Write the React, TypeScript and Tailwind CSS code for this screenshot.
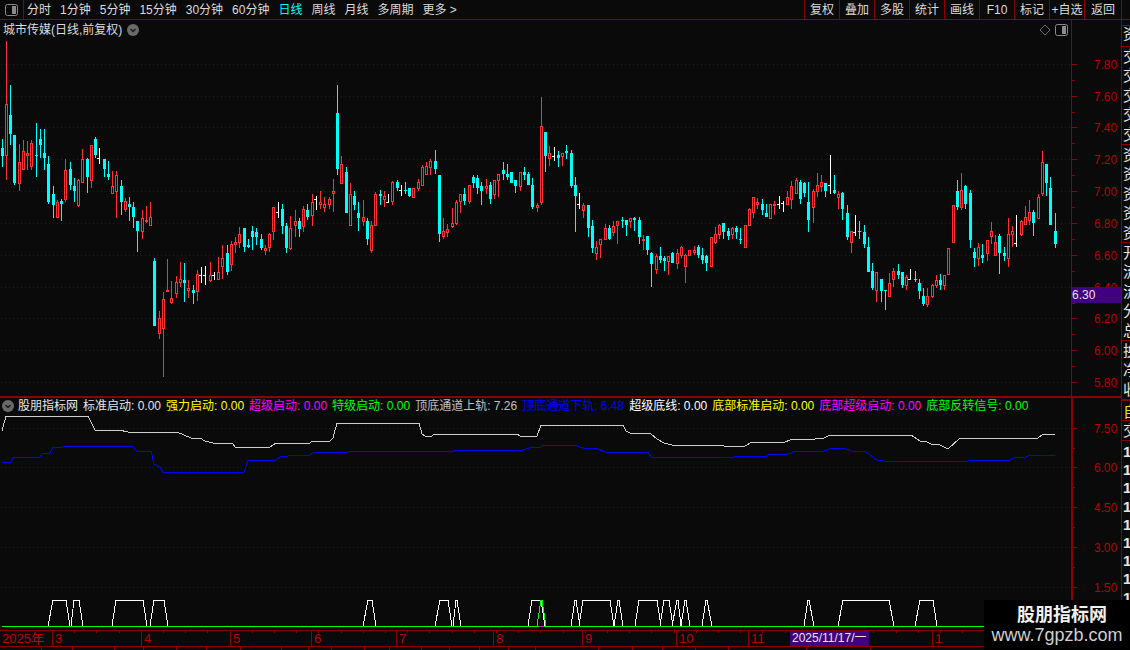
import type { ReactNode } from "react";

type Row = [number, number, number, number, number, string];

// candles read off the chart: x, high, body top, body bottom, low (in 3x px of each block)
const blocks: { x0: number; y0: number; rows: Row[] }[] = [
  {
    x0: 0,
    y0: 30,
    rows: [
      [7, 327, 354, 378, 411, "d"], [19, 33, 222, 377, 450, "u"], [31, 165, 255, 312, 345, "d"], [43, 315, 315, 459, 465, "d"],
      [58, 342, 396, 461, 483, "u"], [70, 330, 363, 419, 420, "u"], [82, 333, 369, 378, 420, "u"], [94, 330, 339, 411, 420, "u"],
      [109, 279, 375, 378, 441, "d"], [121, 297, 327, 345, 384, "d"], [133, 297, 369, 384, 420, "d"], [145, 378, 402, 516, 522, "d"],
      [160, 468, 492, 525, 564, "d"], [172, 510, 516, 564, 564, "u"], [184, 507, 513, 522, 573, "d"], [196, 387, 420, 510, 516, "u"],
      [211, 396, 417, 465, 480, "d"], [223, 444, 468, 483, 516, "d"], [235, 447, 450, 528, 530, "u"], [247, 357, 387, 459, 460, "u"],
      [262, 384, 387, 441, 489, "d"], [274, 345, 345, 453, 474, "u"], [286, 321, 327, 375, 384, "d"], [298, 354, 384, 387, 402, "f"],
      [313, 387, 387, 417, 441, "d"], [325, 393, 432, 441, 450, "d"], [337, 423, 468, 492, 492, "u"], [349, 423, 435, 486, 564, "u"],
      [364, 450, 468, 516, 555, "d"], [376, 504, 513, 540, 546, "u"], [388, 501, 522, 531, 573, "d"], [400, 516, 531, 561, 594, "d"],
      [412, 573, 573, 603, 666, "d"], [427, 540, 564, 606, 627, "u"], [439, 528, 570, 576, 579, "u"], [451, 516, 561, 588, 588, "u"],
      [463, 684, 693, 888, 888, "d"], [478, 843, 864, 912, 927, "u"], [490, 786, 807, 897, 1041, "u"], [502, 687, 780, 786, 786, "u"],
      [514, 753, 804, 820, 822, "u"], [529, 738, 756, 792, 804, "u"], [541, 696, 747, 759, 771, "u"], [553, 699, 750, 759, 816, "d"],
      [565, 750, 774, 783, 804, "u"], [580, 765, 780, 789, 822, "d"], [592, 720, 732, 786, 813, "u"], [604, 711, 735, 738, 759, "f"],
      [616, 708, 735, 738, 765, "f"], [631, 696, 735, 753, 756, "u"], [643, 726, 735, 738, 750, "f"], [655, 681, 726, 750, 750, "u"],
      [667, 645, 684, 711, 747, "u"], [682, 645, 669, 726, 735, "d"], [694, 633, 642, 705, 723, "u"], [706, 621, 636, 645, 669, "u"],
      [718, 591, 612, 639, 654, "u"], [733, 594, 594, 651, 666, "d"], [745, 627, 645, 651, 654, "d"], [757, 588, 603, 621, 660, "d"],
      [769, 594, 606, 621, 645, "d"], [784, 612, 627, 654, 660, "d"], [796, 645, 654, 663, 675, "u"], [808, 609, 612, 654, 666, "u"],
      [820, 531, 531, 606, 630, "u"], [835, 516, 546, 549, 564, "f"],
    ],
  },
  {
    x0: 280,
    y0: 70,
    rows: [
      [7, 402, 417, 468, 492, "d"], [19, 459, 468, 534, 549, "d"], [31, 438, 474, 537, 540, "u"], [46, 420, 453, 468, 501, "u"],
      [58, 444, 453, 477, 501, "d"], [70, 408, 417, 471, 486, "u"], [82, 402, 420, 441, 450, "d"], [97, 372, 396, 438, 468, "u"],
      [109, 378, 387, 390, 420, "f"], [121, 363, 396, 405, 417, "u"], [133, 381, 402, 414, 426, "u"], [148, 381, 387, 405, 417, "u"],
      [160, 327, 363, 372, 426, "u"], [172, 45, 129, 297, 315, "d"], [184, 258, 282, 342, 342, "u"], [199, 291, 306, 429, 429, "d"],
      [211, 339, 372, 468, 468, "u"], [223, 363, 378, 405, 420, "d"], [235, 396, 429, 444, 483, "d"], [250, 390, 441, 456, 468, "u"],
      [262, 444, 453, 507, 525, "d"], [274, 453, 465, 543, 549, "u"], [286, 366, 372, 468, 468, "u"], [301, 360, 372, 378, 405, "d"],
      [313, 363, 378, 390, 411, "u"], [325, 372, 396, 399, 399, "f"], [337, 333, 336, 396, 405, "u"], [352, 330, 336, 354, 363, "d"],
      [364, 345, 360, 363, 378, "f"], [376, 336, 360, 363, 372, "d"], [388, 354, 354, 378, 381, "d"], [400, 354, 354, 384, 384, "u"],
      [415, 327, 336, 357, 363, "u"], [427, 285, 291, 348, 348, "u"], [439, 276, 288, 315, 315, "u"], [451, 267, 273, 294, 315, "u"],
      [466, 240, 273, 297, 312, "d"], [478, 315, 315, 492, 516, "d"], [490, 444, 483, 501, 507, "u"], [502, 462, 477, 489, 501, "u"],
      [517, 414, 459, 471, 474, "u"], [529, 390, 396, 462, 465, "u"], [541, 372, 372, 396, 429, "u"], [553, 354, 372, 393, 405, "d"],
      [568, 345, 345, 396, 402, "u"], [580, 315, 321, 339, 354, "d"], [592, 315, 324, 354, 372, "d"], [604, 336, 348, 363, 405, "d"],
      [619, 327, 348, 357, 372, "u"], [631, 336, 345, 387, 402, "d"], [643, 330, 330, 375, 387, "u"], [655, 312, 312, 333, 381, "u"],
      [670, 276, 300, 312, 330, "d"], [682, 282, 312, 321, 330, "d"], [694, 306, 306, 339, 339, "d"], [706, 330, 330, 348, 369, "d"],
      [721, 306, 306, 351, 363, "u"], [733, 291, 306, 315, 330, "d"], [745, 306, 312, 345, 345, "d"], [757, 324, 345, 411, 417, "d"],
      [772, 399, 405, 414, 426, "u"], [784, 81, 168, 399, 405, "u"], [796, 186, 186, 258, 306, "d"], [808, 228, 249, 267, 288, "u"],
      [823, 231, 258, 261, 273, "f"], [835, 243, 255, 264, 291, "d"],
    ],
  },
  {
    x0: 560,
    y0: 130,
    rows: [
      [7, 69, 69, 81, 108, "u"], [19, 45, 63, 69, 87, "d"], [34, 60, 69, 168, 174, "d"], [46, 141, 165, 198, 306, "d"],
      [58, 189, 222, 225, 237, "f"], [70, 219, 225, 243, 264, "u"], [85, 225, 225, 294, 321, "d"], [97, 270, 288, 354, 369, "d"],
      [109, 333, 351, 372, 390, "u"], [121, 327, 327, 345, 384, "u"], [136, 282, 294, 330, 330, "u"], [148, 285, 294, 327, 330, "d"],
      [160, 273, 288, 309, 318, "u"], [172, 273, 273, 288, 342, "u"], [187, 261, 270, 273, 294, "d"], [199, 270, 270, 285, 318, "d"],
      [211, 264, 264, 276, 294, "u"], [223, 261, 264, 270, 303, "d"], [238, 261, 270, 321, 342, "d"], [250, 315, 327, 333, 360, "u"],
      [262, 318, 318, 360, 375, "d"], [274, 366, 369, 402, 471, "d"], [289, 372, 378, 420, 432, "u"], [301, 351, 378, 390, 399, "d"],
      [313, 378, 384, 393, 423, "d"], [325, 378, 378, 396, 435, "u"], [337, 366, 369, 399, 399, "d"], [352, 357, 369, 402, 417, "u"],
      [364, 348, 351, 378, 384, "u"], [376, 372, 375, 411, 459, "u"], [388, 360, 360, 378, 378, "u"], [403, 348, 360, 369, 375, "u"],
      [415, 345, 351, 375, 384, "d"], [427, 354, 375, 390, 402, "d"], [439, 375, 378, 399, 423, "d"], [454, 321, 321, 411, 411, "u"],
      [466, 291, 312, 339, 342, "u"], [478, 282, 285, 315, 327, "u"], [490, 279, 279, 306, 327, "d"], [505, 294, 303, 318, 330, "d"],
      [517, 291, 294, 315, 327, "u"], [529, 288, 294, 306, 327, "d"], [541, 294, 327, 330, 342, "d"], [556, 285, 285, 354, 354, "u"],
      [568, 234, 237, 288, 288, "u"], [580, 201, 201, 249, 264, "u"], [592, 204, 216, 225, 237, "u"], [607, 207, 222, 240, 255, "d"],
      [619, 222, 249, 261, 261, "d"], [631, 222, 222, 267, 267, "u"], [643, 213, 222, 228, 255, "u"], [658, 198, 222, 225, 237, "f"],
      [670, 213, 219, 222, 246, "f"], [682, 183, 201, 225, 225, "u"], [694, 153, 168, 210, 237, "u"], [709, 144, 150, 192, 192, "u"],
      [721, 150, 156, 207, 222, "d"], [733, 156, 159, 189, 201, "d"], [745, 156, 216, 270, 306, "d"], [760, 177, 183, 234, 279, "u"],
      [772, 129, 165, 186, 201, "u"], [784, 135, 156, 171, 186, "u"], [796, 159, 159, 183, 201, "d"], [811, 75, 165, 168, 192, "f"],
      [823, 135, 180, 189, 192, "d"], [835, 183, 192, 204, 237, "u"],
    ],
  },
  {
    x0: 830,
    y0: 130,
    rows: [
      [37, 186, 189, 237, 270, "d"], [52, 225, 249, 321, 330, "d"], [64, 303, 303, 339, 369, "u"], [76, 255, 306, 309, 318, "f"],
      [88, 273, 303, 306, 327, "d"], [103, 285, 306, 342, 354, "d"], [115, 321, 351, 426, 426, "d"], [127, 399, 423, 474, 480, "d"],
      [139, 426, 426, 483, 516, "u"], [154, 447, 447, 483, 516, "d"], [166, 480, 480, 483, 540, "d"], [178, 429, 459, 501, 501, "u"],
      [190, 414, 423, 450, 471, "u"], [205, 402, 423, 435, 447, "d"], [217, 426, 426, 465, 474, "d"], [229, 435, 441, 468, 480, "u"],
      [241, 417, 447, 450, 450, "f"], [256, 423, 447, 450, 456, "d"], [268, 447, 459, 483, 507, "d"], [280, 474, 498, 522, 528, "d"],
      [292, 474, 498, 525, 531, "u"], [307, 462, 465, 501, 504, "u"], [319, 435, 450, 468, 474, "u"], [331, 432, 450, 465, 480, "d"],
      [343, 435, 435, 468, 480, "u"], [355, 354, 354, 435, 435, "u"], [370, 225, 225, 339, 339, "u"], [382, 150, 183, 231, 240, "d"],
      [394, 129, 180, 234, 240, "u"], [406, 165, 168, 222, 237, "d"], [421, 180, 189, 330, 354, "d"], [433, 354, 366, 384, 411, "d"],
      [445, 339, 351, 387, 408, "u"], [457, 342, 375, 384, 399, "d"], [472, 330, 330, 372, 393, "u"], [484, 276, 303, 321, 342, "u"],
      [496, 315, 336, 378, 378, "u"], [508, 312, 318, 369, 432, "d"], [523, 351, 369, 378, 393, "d"], [535, 264, 312, 387, 411, "u"],
      [547, 288, 303, 315, 351, "u"], [559, 255, 339, 342, 351, "f"], [574, 270, 273, 315, 318, "u"], [586, 228, 261, 285, 285, "u"],
      [598, 210, 246, 273, 285, "u"], [610, 240, 246, 279, 318, "d"], [625, 192, 201, 267, 267, "u"], [637, 63, 96, 192, 198, "u"],
      [649, 102, 102, 159, 198, "d"], [661, 141, 174, 285, 285, "d"], [676, 249, 303, 342, 354, "d"],
    ],
  },
];

const RED = "#ff3232";
const CYAN = "#00ffff";

const whiteLine = [
  [2, 431], [6, 416], [88, 416], [95, 430], [119, 430], [128, 432], [177, 432], [184, 435], [191, 438], [200, 438], [205, 441], [213, 443],
  [232, 443], [236, 448], [270, 447], [276, 443], [310, 443], [312, 441], [330, 441], [333, 438], [337, 423], [419, 423], [422, 434], [425, 436],
  [432, 436], [434, 434], [517, 434], [520, 436], [537, 436], [541, 425], [623, 425], [626, 431], [630, 433], [650, 433], [657, 439], [664, 443],
  [672, 445], [722, 445], [724, 446], [745, 446], [752, 442], [785, 442], [790, 440], [796, 439], [815, 439], [824, 438], [830, 435], [911, 435],
  [920, 441], [925, 441], [931, 444], [940, 445], [948, 449], [960, 438], [1038, 438], [1043, 434], [1055, 434],
];
const blueLine = [
  [2, 462], [11, 462], [14, 457], [40, 457], [43, 453], [50, 453], [53, 447], [63, 447], [64, 446], [132, 446], [137, 451], [151, 451], [154, 464],
  [160, 467], [163, 472], [244, 472], [248, 460], [276, 460], [280, 457], [288, 456], [310, 455], [315, 452], [348, 452], [349, 451], [454, 451],
  [455, 450], [523, 450], [532, 447], [541, 447], [543, 445], [574, 445], [583, 448], [596, 448], [605, 452], [648, 452], [651, 457], [734, 457],
  [736, 456], [767, 456], [769, 454], [788, 454], [796, 451], [824, 451], [832, 448], [844, 448], [851, 451], [865, 451], [877, 460], [884, 461],
  [968, 461], [969, 460], [1010, 460], [1015, 457], [1026, 457], [1030, 455], [1055, 455],
];

// x start, plateau start, plateau end, x end
const signals = [
  [48, 53, 66, 70], [71, 74, 79, 83], [112, 116, 143, 147], [150, 154, 164, 168], [363, 368, 372, 376], [435, 440, 448, 452], [453, 456, 457, 461],
  [528, 532, 541, 545], [571, 575, 576, 580], [579, 583, 610, 614], [614, 618, 619, 623], [635, 639, 657, 661], [660, 664, 669, 673], [672, 677, 678, 681],
  [681, 685, 686, 690], [702, 706, 707, 712], [804, 808, 809, 814], [838, 843, 889, 894], [915, 920, 933, 937],
];

const topPrices = [
  ["7.80", 64], ["7.60", 96], ["7.40", 127], ["7.20", 159], ["7.00", 191], ["6.80", 223], ["6.60", 255], ["6.40", 287], ["6.20", 318], ["6.00", 350], ["5.80", 382],
] as const;
const lowPrices = [
  ["7.50", 428], ["6.00", 467], ["4.50", 507], ["3.00", 547], ["1.50", 587],
] as const;

const legend = [
  ["标准启动: 0.00", "text-[#e6e6e6]"],
  ["强力启动: 0.00", "text-[#ffff00]"],
  ["超级启动: 0.00", "text-[#ff00ff]"],
  ["特级启动: 0.00", "text-[#00ff00]"],
  ["顶底通道上轨: 7.26", "text-[#c0c0c0]"],
  ["顶底通道下轨: 6.48", "text-[#0000ff]"],
  ["超级底线: 0.00", "text-[#ffffff]"],
  ["底部标准启动: 0.00", "text-[#ffff00]"],
  ["底部超级启动: 0.00", "text-[#ff00ff]"],
  ["底部反转信号: 0.00", "text-[#00ff00]"],
];

const tabs = ["分时", "1分钟", "5分钟", "15分钟", "30分钟", "60分钟", "日线", "周线", "月线", "多周期", "更多 >"];
const buttons = ["复权", "叠加", "多股", "统计", "画线", "F10", "标记", "+自选"];

const months = [
  { label: "2025年", w: "w-[52px]" },
  { label: "3", w: "w-[89px]" },
  { label: "4", w: "w-[89px]" },
  { label: "5", w: "w-[81px]" },
  { label: "6", w: "w-[85px]" },
  { label: "7", w: "w-[97px]" },
  { label: "8", w: "w-[89px]" },
  { label: "9", w: "w-[94px]" },
  { label: "10", w: "w-[72px]" },
  { label: "11", w: "w-[42px]" },
];

const footCells = ["w-[42px]", "w-[31px]", "w-[42px]", "w-[29px]", "w-[33px]", "w-[30px]", "w-[34px]", "w-[41px]", "w-[27px]", "w-[23px]", "w-[33px]", "w-[25px]", "w-[32px]", "w-[28px]", "w-[30px]", "w-[29px]", "w-[27px]", "w-[63px]", "w-[34px]", "w-[30px]", "w-[33px]", "w-[33px]", "w-[78px]", "w-[64px]"];

function PanelIcon() {
  return (
    <svg width="13" height="12" viewBox="0 0 13 12">
      <rect x="0.5" y="0.5" width="12" height="11" rx="2" fill="none" stroke="#8a8a8a" />
      <rect x="7" y="2" width="4" height="8" fill="#8a8a8a" />
    </svg>
  );
}

function ChevronDot() {
  return (
    <svg width="12" height="12" viewBox="0 0 12 12" className="shrink-0">
      <circle cx="6" cy="6" r="6" fill="#6a6a6a" />
      <path d="M3.5 5 L6 7.5 L8.5 5" fill="none" stroke="#161616" strokeWidth="1.3" />
    </svg>
  );
}

function Candle({ x, high, top, bottom, low, kind }: { x: number; high: number; top: number; bottom: number; low: number; kind: string }) {
  if (kind === "f") {
    return (
      <g fill="#ffffff">
        <rect x={x} y={high} width={1} height={low - high} />
        <rect x={x - 2} y={top} width={2} height={1} />
      </g>
    );
  }
  const color = kind === "u" ? RED : CYAN;
  const h = Math.max(bottom - top, 1);
  return (
    <g>
      <rect x={x} y={high} width={1} height={low - high} fill={color} />
      {kind === "u" ? (
        <rect x={x - 1.5 + 0.5} y={top + 0.5} width={2} height={Math.max(h - 1, 1)} fill="#0a0a0a" stroke={color} />
      ) : (
        <rect x={x - 1} y={top} width={3} height={h} fill={color} />
      )}
    </g>
  );
}

function Grid({ rows }: { rows: readonly (readonly [string, number])[] }) {
  return (
    <g stroke="#6e0000" strokeDasharray="1 3">
      {rows.map(([label, y]) => (
        <line key={label} x1="1" x2="1071" y1={y + 0.5} y2={y + 0.5} />
      ))}
    </g>
  );
}

function PriceAxis({ rows, top, height, minor }: { rows: readonly (readonly [string, number])[]; top: number; height: number; minor: number }) {
  return (
    <svg width="50" height={height} viewBox={`1071 ${top} 50 ${height}`} className="block" shapeRendering="crispEdges">
      {rows.map(([label, y]) => (
        <g key={label}>
          <rect x="1071" y={y} width="5" height="1" fill="#8b0000" />
          <rect x="1071" y={y + minor} width="3" height="1" fill="#8b0000" />
          <text x="1093" y={y + 5} fill="#b80000" fontSize="13" textLength="23" lengthAdjust="spacingAndGlyphs" fontFamily="'Liberation Sans', sans-serif">
            {label}
          </text>
        </g>
      ))}
    </svg>
  );
}

function StripRow({ border, children }: { border?: boolean; children: ReactNode }) {
  return <div className={`overflow-hidden pl-[1px] ${border ? "border-t border-[#8b0000]" : ""}`}>{children}</div>;
}

export default function App() {
  const candles = blocks.flatMap((b) =>
    b.rows.map((r) => ({
      x: Math.round(b.x0 + r[0] / 3),
      high: Math.round(b.y0 + r[1] / 3),
      top: Math.round(b.y0 + r[2] / 3),
      bottom: Math.round(b.y0 + r[3] / 3),
      low: Math.round(b.y0 + r[4] / 3),
      kind: r[5],
    })),
  );

  return (
    <div className="relative h-[650px] w-[1130px] overflow-hidden bg-[#0a0a0a] font-['Liberation_Sans','Noto_Sans_CJK_SC',sans-serif] text-[12px] leading-none text-[#dcdcdc]">
      {/* top toolbar */}
      <div className="flex h-[20px] items-center border-b border-[#8b0000]">
        <div className="flex h-full w-[24px] items-center justify-center border-r border-[#8b0000]">
          <PanelIcon />
        </div>
        <div className="ml-[3px] flex gap-[9px]">
          {tabs.map((t) => (
            <span key={t} className={t === "日线" ? "text-[#00ffff]" : ""}>
              {t}
            </span>
          ))}
        </div>
        <div className="ml-auto mr-[8px] flex h-full border-r border-[#8b0000]">
          {buttons.map((b) => (
            <div key={b} className="flex w-[35px] items-center justify-center border-l border-[#8b0000]">
              {b}
            </div>
          ))}
          <div className="flex w-[37px] items-center justify-center border-l border-[#8b0000]">返回</div>
        </div>
      </div>

      <div className="flex h-[610px]">
        {/* charts */}
        <div className="w-[1071px] shrink-0">
          <div className="flex h-[20px] items-center justify-between pl-[3px] pr-[3px]">
            <div className="flex items-center gap-[5px]">
              <span>城市传媒(日线,前复权)</span>
              <ChevronDot />
            </div>
            <div className="flex items-center gap-[4px]">
              <svg width="12" height="12" viewBox="0 0 12 12">
                <path d="M6 1 L11 6 L6 11 L1 6 Z" fill="none" stroke="#6a6a6a" />
              </svg>
              <PanelIcon />
            </div>
          </div>
          <svg width="1071" height="356" viewBox="0 40 1071 356" className="block" shapeRendering="crispEdges">
            <Grid rows={topPrices} />
            {candles.map((c) => (
              <Candle key={c.x} {...c} />
            ))}
          </svg>

          <div className="flex h-[18px] items-center gap-[5px] border-t-2 border-[#8b0000] pl-[2px]">
            <ChevronDot />
            <span className="ml-[-1px] whitespace-nowrap text-[#e6e6e6]">股朋指标网</span>
            {legend.map(([text, color]) => (
              <span key={text} className={`whitespace-nowrap ${color}`}>
                {text}
              </span>
            ))}
          </div>
          <svg width="1071" height="216" viewBox="0 414 1071 216" className="block" shapeRendering="crispEdges">
            <Grid rows={lowPrices} />
            <polyline points={whiteLine.join(" ")} fill="none" stroke="#cfcfcf" />
            <polyline points={blueLine.join(" ")} fill="none" stroke="#0000ff" />
            {signals.map((s) => (
              <polyline key={s[0]} points={`${s[0]},626 ${s[1]},600 ${s[2]},600 ${s[3]},626`} fill="none" stroke="#ffffff" />
            ))}
            <polyline points="537,626 541,600 542,600 546,626" fill="none" stroke="#00ff00" />
            <rect x="2" y="626" width="1069" height="1" fill="#00ff00" />
            <rect x="539" y="626" width="5" height="1" fill="#ff00ff" />
          </svg>
        </div>

        {/* price axis */}
        <div className="w-[50px] shrink-0 border-l border-[#8b0000]">
          <div className="relative h-[376px] overflow-hidden">
            <PriceAxis rows={topPrices} top={20} height={376} minor={16} />
            <div className="absolute left-0 top-[267px] flex h-[16px] w-full items-center bg-[#400080] text-[12px] text-[#e6e6e6]">6.30</div>
          </div>
          <div className="h-[234px] overflow-hidden border-t-2 border-[#8b0000]">
            <div className="border-l border-[#8b0000]">
              <div className="-ml-px">
                <PriceAxis rows={lowPrices} top={398} height={232} minor={20} />
              </div>
            </div>
          </div>
        </div>

        {/* side list, cut off by the window edge */}
        <div className="w-[9px] shrink-0 overflow-hidden border-l border-[#8b0000] text-[15px] text-[#e6e6e6]">
          <div className="h-[5px]" />
          <StripRow border>
            <div className="h-[20px]">资</div>
          </StripRow>
          <StripRow border>
            <div className="h-[97px] leading-[19.4px]">交<br />交<br />交<br />交<br />交</div>
          </StripRow>
          <StripRow border>
            <div className="h-[97px] leading-[19.4px]">资<br />资<br />资<br />资<br />资</div>
          </StripRow>
          <StripRow border>
            <div className="h-[97px] leading-[19.4px]">开<br />流<br />流<br />分<br />总</div>
          </StripRow>
          <StripRow border>
            <div className="h-[58px] leading-[19.4px]">换<br />净<br />收</div>
          </StripRow>
          <div className="h-[21px] border-t-2 border-[#8b0000] pl-[1px] pt-[3px] text-[#e8e800]">自</div>
          <StripRow border>
            <div className="h-[19px] pt-[2px]">交</div>
          </StripRow>
          <StripRow border>
            <div className="h-[170px] pt-[2px] font-bold leading-[18.2px]">1<br />1<br />1<br />1<br />1<br />1<br />1<br />1<br />1</div>
          </StripRow>
        </div>
      </div>

      {/* date axis */}
      <div className="absolute bottom-[3px] left-0 flex h-[17px] w-[1130px] border-y border-[#8b0000] leading-[15px] text-[#c00000]">
        {months.map((m, i) => (
          <div key={m.label} className={`${m.w} shrink-0 pl-[2px] text-[13px] ${i > 0 ? "border-l border-[#8b0000]" : ""}`}>
            {m.label}
          </div>
        ))}
        <div className="w-[79px] shrink-0 whitespace-nowrap bg-[#400080] pl-[2px] text-[#e6e6e6]">2025/11/17/一</div>
        <div className="w-[63px] shrink-0" />
        <div className="shrink-0 border-l border-[#8b0000] pl-[2px] text-[13px]">1</div>
        <svg width="1130" height="3" className="absolute left-0 top-0" shapeRendering="crispEdges">
          {Array.from({ length: 50 }, (_, i) => (
            <rect key={i} x={52 + i * 22.2} y="0" width="1" height="2" fill="#8b0000" />
          ))}
        </svg>
      </div>

      {/* tab row, only its top edge is in the window */}
      <div className="absolute bottom-0 left-0 flex h-[3px] w-[1130px] overflow-hidden">
        {footCells.map((w, i) => (
          <div key={i} className={`${w} shrink-0 border-r border-[#8b0000]`} />
        ))}
      </div>

      {/* site stamp */}
      <div className="absolute bottom-0 right-0 flex h-[50px] w-[146px] flex-col items-center bg-black pt-[4px] text-center">
        <div className="pl-[10px] text-[18px] font-bold leading-[22px] text-[#f0f0f0]">股朋指标网</div>
        <div className="text-[18px] leading-[18px] text-[#cfcfcf]">www.7gpzb.com</div>
      </div>
    </div>
  );
}
